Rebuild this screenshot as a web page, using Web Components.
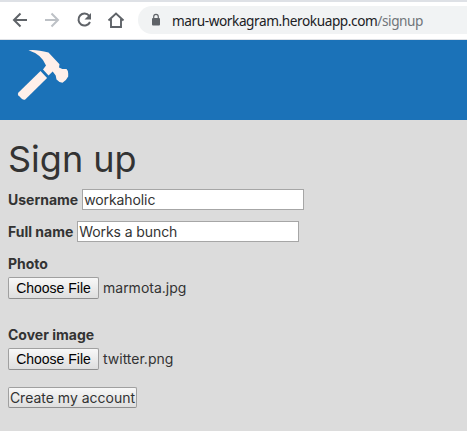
<!DOCTYPE html>
<html lang="en"><head><meta charset="utf-8"><title>Sign up</title>
<style>html,body{margin:0;height:100%;overflow:hidden}body{background:#dcdcdc;color:#333;font:14px/20px Inter,"Open Sans",sans-serif}</style></head>
<body>
<signup-page></signup-page>
<script>
const define=(name,html)=>customElements.define(name,class extends HTMLElement{
 connectedCallback(){
  if(this.shadowRoot)return;
  const t=document.createElement('template');
  t.innerHTML=html;
  this.attachShadow({mode:'open'}).append(t.content.cloneNode(true));
 }
});
define('browser-bar',`<style>
:host{display:flex;box-sizing:border-box;height:40px;border-top:2px solid #dee1e6;border-bottom:1px solid #dee1e6;background:#fff;align-items:center;padding:0 0 1px 10px;gap:12px}
svg{display:block;flex:none}
.nav{width:20px;height:20px}
.pill{flex:1;height:28px;background:#f1f3f4;border-radius:14px 0 0 14px;display:flex;align-items:center;padding-left:12px;gap:10px;color:#202124;font:14.5px/28px "Noto Sans",sans-serif;white-space:nowrap}
.url{letter-spacing:-.45px;transform:scaleX(.94);transform-origin:0 50%}
.url i{font-style:normal;color:#70757a}
</style>
<svg class="nav" viewBox="0 0 20 20" fill="none" stroke="#5f6368" stroke-width="2"><path d="M17 10H4.500M10.500 3.500L4 10l6.500 6.500"/></svg>
<svg class="nav" viewBox="0 0 20 20" fill="none" stroke="#bdc1c6" stroke-width="2"><path d="M3 10h12.500M9.500 3.500L16 10l-6.500 6.500"/></svg>
<svg class="nav" viewBox="0 0 20 20"><path d="M15.200 5.800A6 6 0 1 0 16 12" fill="none" stroke="#5f6368" stroke-width="2"/><path d="M17 3v6.500h-6.500z" fill="#5f6368"/></svg>
<svg class="nav" viewBox="0 0 20 20" fill="none" stroke="#5f6368" stroke-width="1.900"><path d="M2.500 10.500L10 3.500l7.500 7M5 9v8h10V9"/></svg>
<div class="pill"><svg width="12" height="14" viewBox="0 0 12 14"><rect x="2" y="5" width="8" height="7.500" rx="1" fill="#5f6368"/><path d="M3.700 5.500V3.700a2.300 2.300 0 0 1 4.600 0v1.800" fill="none" stroke="#5f6368" stroke-width="1.200"/></svg><span class="url">maru-workagram.herokuapp.com<i>/signup</i></span></div>`);
define('site-header',`<style>
:host{display:block;box-sizing:border-box;height:80px;background:#1b72b8;padding:8px 0 0 16px}
svg{display:block}</style>
<svg width="54" height="54" viewBox="16 48 54 54" fill="#fff0ea"><path d="M28.500 50.200Q36 49 48.500 52.500L59.500 64.200L59 67.500L62.300 68.900L66.500 69Q68.500 71 68.200 73.500V76.500Q66 81 62.500 82.800Q59 82.500 56.500 79.500L55.700 75.500L52.700 71.500L48.500 75.600L43 69.500L46 65.500Q42 54.500 28.500 50.200Z"/><path d="M40.500 71L47.100 77.900L25.500 99.300Q24 100.500 22 99L18.300 95.300Q17.200 93.800 18.500 92.400Z"/></svg>`);
define('text-field',`<style>
:host{display:flex;height:21px;align-items:center;gap:4px}
b{font-weight:700}
input{box-sizing:border-box;width:222px;height:21px;border:1px solid #a6a6a6;border-radius:0;margin:0;padding:1px;background:#fff;color:inherit;font:inherit;line-height:17px;letter-spacing:-.1px;outline:0}
</style><b><slot></slot></b><input type="text">`);
define('file-field',`<style>
:host{display:block;height:71px}
b{display:block;font-weight:700;height:23px;line-height:20px}
div{display:flex;align-items:center;gap:4px}
button{box-sizing:border-box;width:91px;height:22px;margin:0;padding:0;border:1px solid #a0a0a0;border-bottom-color:#8f8f8f;border-radius:2px;background:linear-gradient(#f8f8f8,#dedede);color:#000;font:14px/20px "Liberation Sans",Arial,sans-serif;white-space:nowrap}
</style><b><slot name="label"></slot></b><div><button type="button">Choose File</button><slot></slot></div>`);
define('submit-button',`<style>
:host{display:block}
button{display:block;box-sizing:border-box;width:129px;height:21px;margin:0;padding:0;border:1px solid #a0a0a0;border-bottom-color:#8f8f8f;border-radius:2px;background:linear-gradient(#f8f8f8,#dedede);color:#333;font:inherit;line-height:19px;white-space:nowrap}
</style><button type="button"><slot></slot></button>`);
define('signup-page',`<style>
:host{display:block}
main{padding:20px 8px 0}
h1{margin:0 0 10px;font-size:36px;font-weight:400;line-height:39px}
text-field{margin-bottom:11px}
#name{margin-bottom:12px}
submit-button{margin-top:-9px}
form{margin:0}
</style><browser-bar></browser-bar><site-header></site-header>
<main><h1>Sign up</h1><form>
<text-field id="user">Username</text-field><text-field id="name">Full name</text-field>
<file-field><span slot="label">Photo</span><span>marmota.jpg</span></file-field>
<file-field><span slot="label">Cover image</span><span>twitter.png</span></file-field>
<submit-button>Create my account</submit-button></form></main>`);
const page=document.querySelector('signup-page').shadowRoot;
page.getElementById('user').shadowRoot.querySelector('input').value='workaholic';
page.getElementById('name').shadowRoot.querySelector('input').value='Works a bunch';
</script></body></html>
